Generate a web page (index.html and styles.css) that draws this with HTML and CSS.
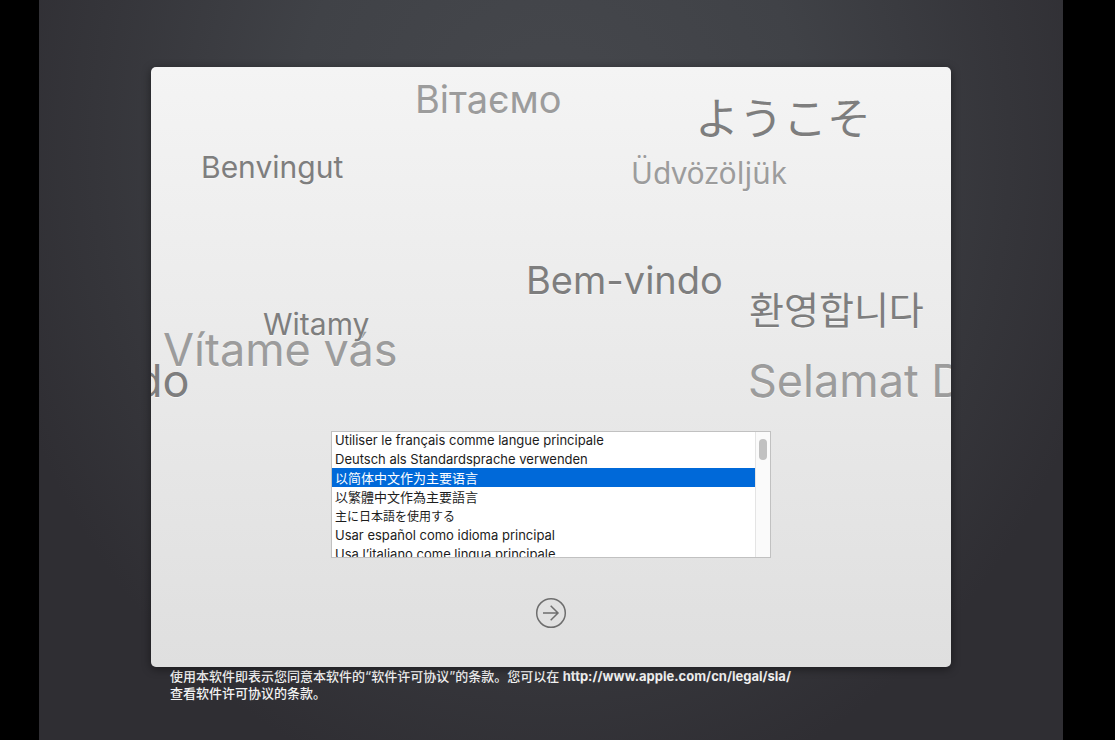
FILE: index.html
```html
<!DOCTYPE html>
<html lang="zh-CN">
<head>
<meta charset="utf-8">
<title>选择语言</title>
<link rel="stylesheet" href="styles.css">
</head>
<body>
<main class="screen">
  <form class="panel">
    <div class="greetings">
      <span class="word word-uk" lang="uk">Вітаємо</span>
      <span class="word word-ja dark" lang="ja">ようこそ</span>
      <span class="word word-ca dark" lang="ca">Benvingut</span>
      <span class="word word-hu" lang="hu">Üdvözöljük</span>
      <span class="word word-pt dark" lang="pt">Bem-vindo</span>
      <span class="word word-ko dark" lang="ko">환영합니다</span>
      <span class="word word-cs" lang="cs">Vítame vás</span>
      <span class="word word-pl dark" lang="pl">Witamy</span>
      <span class="word word-br dark" lang="pt">do</span>
      <span class="word word-ms" lang="ms">Selamat D</span>
    </div>
    <div class="picker">
      <select class="languages" size="7" aria-label="语言">
        <option lang="fr">Utiliser le français comme langue principale</option>
        <option lang="de">Deutsch als Standardsprache verwenden</option>
        <option class="cjk" lang="zh-CN" selected>以简体中文作为主要语言</option>
        <option class="cjk traditional" lang="zh-TW">以繁體中文作為主要語言</option>
        <option class="japanese" lang="ja">主に日本語を使用する</option>
        <option lang="es">Usar español como idioma principal</option>
        <option lang="it">Usa l’italiano come lingua principale</option>
      </select>
      <div class="track"><div class="thumb"></div></div>
    </div>
    <button class="next" type="button" aria-label="继续">
      <svg viewBox="0 0 32 32" width="32" height="32" fill="none" stroke="#6e6e6e" stroke-width="1.5">
        <circle cx="16" cy="16" r="14.3"/>
        <path d="M8 16h15M15.7 8.7l7.3 7.3-7.3 7.3"/>
      </svg>
    </button>
  </form>
  <p class="license">使用本软件即表示您同意本软件的“软件许可协议”的条款。您可以在 <a href="http://www.apple.com/cn/legal/sla/">http://www.apple.com/cn/legal/sla/</a><br>查看软件许可协议的条款。</p>
</main>
</body>
</html>
```
FILE: styles.css
```css
* { box-sizing: border-box; }

body {
  margin: 0;
  padding: 0 52px 0 39px;
  background: #000;
  font-family: Inter, "Noto Sans CJK SC", sans-serif;
}

.screen {
  display: flex;
  flex-direction: column;
  align-items: center;
  min-height: 100vh;
  padding: 67px 16px 0;
  background: radial-gradient(ellipse 56% 90% at 50% 20%, #46484d 0%, #404247 45%, #35353a 80%, #2f2e33 100%);
}

.panel {
  display: flex;
  flex-direction: column;
  align-items: center;
  width: 100%;
  max-width: 800px;
  padding-bottom: 38px;
  overflow: hidden;
  position: relative;
  border-radius: 5px;
  background: linear-gradient(#f4f4f4, #dfdfdf);
  box-shadow: 0 2px 10px rgba(0, 0, 0, 0.45);
}

.greetings {
  width: 100%;
  height: 364px;
}

.word {
  position: absolute;
  line-height: 1;
  white-space: nowrap;
  color: #9c9c9c;
  text-shadow: 0 1px 0 #f6f6f6;
}

.dark { color: #7e7e7e; }

.word-uk { left: 264px; top: 13px; font-size: 38px; }
.word-ja { left: 544px; top: 27px; font: 400 44px/1 "Noto Sans CJK JP", sans-serif; }
.word-ca { left: 50px; top: 85px; font-size: 30px; }
.word-hu { left: 480px; top: 91px; font: 30px/1 "Noto Sans", sans-serif; }
.word-pt { left: 375px; top: 194px; font-size: 38px; }
.word-ko { left: 598px; top: 222px; font: 400 38px/1 "Noto Sans CJK KR", sans-serif; }
.word-cs { left: 12px; top: 260px; font-size: 45px; }
.word-pl { left: 112px; top: 242px; font-size: 30px; }
.word-br { left: -16px; top: 291px; font-size: 45px; }
.word-ms { left: 597px; top: 291px; font-size: 45px; }

.picker {
  display: flex;
  width: 440px;
  max-width: 100%;
  height: 127px;
  overflow: hidden;
  border: 1px solid #c1c1c1;
  background: #fff;
}

.languages {
  flex: 1;
  min-width: 0;
  height: 127px;
  margin-top: -2px;
  padding: 0;
  overflow: hidden;
  border: 0;
  border-radius: 0;
  outline: 0;
  background: #fff;
  color: #1c1c1c;
  font: 13px Inter, "Noto Sans CJK SC", sans-serif;
}

.languages option {
  height: 19px;
  min-height: 19px;
  padding: 2px 3px 0;
  color: #1c1c1c;
}

.languages .cjk { padding-top: 0; }

.languages option:checked {
  background: #0069d9 linear-gradient(#0069d9, #0069d9);
  color: #fff;
}

.languages .traditional { font-family: "Noto Sans CJK TC", sans-serif; }

.languages .japanese {
  padding-top: 1px;
  font-family: "Noto Sans CJK JP", sans-serif;
  font-size: 12px;
}

.track {
  width: 15px;
  padding: 7px 3px;
  border-left: 1px solid #e4e4e4;
  background: #fafafa;
}

.thumb {
  width: 8px;
  height: 21px;
  border-radius: 4px;
  background: #c1c1c1;
}

.next {
  display: flex;
  margin-top: 39px;
  padding: 0;
  border: 0;
  background: none;
}

.license {
  width: 100%;
  max-width: 762px;
  margin: 1px 0 0;
  color: #f2f2f2;
  font-size: 13px;
  font-weight: 500;
  line-height: 17px;
}

.license a {
  color: inherit;
  font-weight: 700;
  text-decoration: none;
}
```
